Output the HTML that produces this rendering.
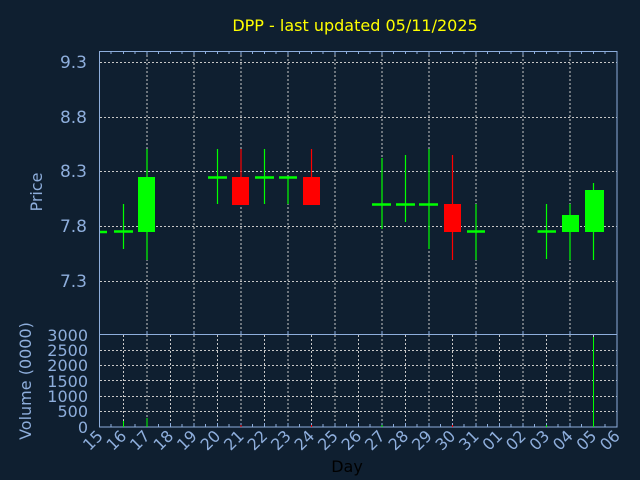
<!DOCTYPE html>
<html><head><meta charset="utf-8"><style>
html,body{margin:0;padding:0;background:#0f1f30;}
svg{display:block;}
text{font-family:"DejaVu Sans","Liberation Sans",sans-serif;}
</style></head><body>
<svg width="640" height="480" viewBox="0 0 640 480" xmlns="http://www.w3.org/2000/svg">
<rect width="640" height="480" fill="#0f1f30"/>
<text x="355" y="31" fill="#ffff00" font-size="16" text-anchor="middle">DPP - last updated 05/11/2025</text>
<g stroke="#c8c8c8" stroke-width="1" stroke-dasharray="2,2" fill="none">
<path d="M100 62.5H617M100 117.5H617M100 171.5H617M100 226.5H617M100 281.5H617"/>
<path d="M147 51V334M194 51V334M241 51V334M288 51V334M335 51V334M382 51V334M429 51V334M476 51V334M523 51V334M570 51V334"/>
<path d="M100 411.5H617M100 396.5H617M100 380.5H617M100 365.5H617M100 350.5H617"/>
<path d="M123.5 335V427M147 335V427M170.5 335V427M194 335V427M217.5 335V427M241 335V427M264.5 335V427M288 335V427M311.5 335V427M335 335V427M358.5 335V427M382 335V427M405.5 335V427M429 335V427M452.5 335V427M476 335V427M499.5 335V427M523 335V427M546.5 335V427M570 335V427M593.5 335V427"/>
</g>
<g stroke="#8eaedc" stroke-width="1" fill="none">
<rect x="99.5" y="51.5" width="517.5" height="283"/>
<rect x="99.5" y="334.5" width="517.5" height="92.5"/>
<path d="M111 51v3M123.5 51v3M135 51v3M147 51v4M158.5 51v3M170.5 51v3M182 51v3M194 51v4M205.5 51v3M217.5 51v3M229 51v3M241 51v4M252.5 51v3M264.5 51v3M276 51v3M288 51v4M299.5 51v3M311.5 51v3M323 51v3M335 51v4M346.5 51v3M358.5 51v3M370 51v3M382 51v4M393.5 51v3M405.5 51v3M417 51v3M429 51v4M440.5 51v3M452.5 51v3M464 51v3M476 51v4M487.5 51v3M499.5 51v3M511 51v3M523 51v4M534.5 51v3M546.5 51v3M558 51v3M570 51v4M581.5 51v3M593.5 51v3M605 51v3"/>
<path d="M111 427v-3M123.5 427v-4M135 427v-3M147 427v-4M158.5 427v-3M170.5 427v-4M182 427v-3M194 427v-4M205.5 427v-3M217.5 427v-4M229 427v-3M241 427v-4M252.5 427v-3M264.5 427v-4M276 427v-3M288 427v-4M299.5 427v-3M311.5 427v-4M323 427v-3M335 427v-4M346.5 427v-3M358.5 427v-4M370 427v-3M382 427v-4M393.5 427v-3M405.5 427v-4M417 427v-3M429 427v-4M440.5 427v-3M452.5 427v-4M464 427v-3M476 427v-4M487.5 427v-3M499.5 427v-4M511 427v-3M523 427v-4M534.5 427v-3M546.5 427v-4M558 427v-3M570 427v-4M581.5 427v-3M593.5 427v-4M605 427v-3"/>
<path d="M147 334v-3M194 334v-3M241 334v-3M288 334v-3M335 334v-3M382 334v-3M429 334v-3M476 334v-3M523 334v-3M570 334v-3"/>
</g>
<g fill="#8eaedc" font-size="17" text-anchor="end">
<text x="87" y="68">9.3</text><text x="87" y="123">8.8</text><text x="87" y="177">8.3</text><text x="87" y="232">7.8</text><text x="87" y="287">7.3</text>
</g>
<g fill="#8eaedc" font-size="16" text-anchor="end">
<text x="88" y="341">3000</text><text x="88" y="356">2500</text><text x="88" y="371">2000</text><text x="88" y="387">1500</text><text x="88" y="402">1000</text><text x="88" y="417">500</text><text x="88" y="433">0</text>
</g>
<text transform="translate(42,192) rotate(-90)" fill="#8eaedc" font-size="16" text-anchor="middle">Price</text>
<text transform="translate(31,381) rotate(-90)" fill="#8eaedc" font-size="16" text-anchor="middle">Volume (0000)</text>
<text x="347" y="472" fill="#000" font-size="16" text-anchor="middle">Day</text>
<g fill="#8eaedc" font-size="16" text-anchor="end">
<text transform="translate(104,437) rotate(-45)">15</text><text transform="translate(127.5,437) rotate(-45)">16</text><text transform="translate(151,437) rotate(-45)">17</text><text transform="translate(174.5,437) rotate(-45)">18</text><text transform="translate(198,437) rotate(-45)">19</text><text transform="translate(221.5,437) rotate(-45)">20</text><text transform="translate(245,437) rotate(-45)">21</text><text transform="translate(268.5,437) rotate(-45)">22</text><text transform="translate(292,437) rotate(-45)">23</text><text transform="translate(315.5,437) rotate(-45)">24</text><text transform="translate(339,437) rotate(-45)">25</text><text transform="translate(362.5,437) rotate(-45)">26</text><text transform="translate(386,437) rotate(-45)">27</text><text transform="translate(409.5,437) rotate(-45)">28</text><text transform="translate(433,437) rotate(-45)">29</text><text transform="translate(456.5,437) rotate(-45)">30</text><text transform="translate(480,437) rotate(-45)">31</text><text transform="translate(503.5,437) rotate(-45)">01</text><text transform="translate(527,437) rotate(-45)">02</text><text transform="translate(550.5,437) rotate(-45)">03</text><text transform="translate(574,437) rotate(-45)">04</text><text transform="translate(597.5,437) rotate(-45)">05</text><text transform="translate(621,437) rotate(-45)">06</text>
</g>
<g stroke="#00ff00" stroke-width="1.2" fill="none">
<path d="M123.5 204V249M147 149V260M217.5 149V204M264.5 149V204M288 177V204M382 158V229M405.5 155V222M429 149V249M476 204V260M546.5 204V259M570 204V260M593.5 183V260"/>
</g>
<g stroke="#00ff00" stroke-width="2.5" fill="none">
<path d="M100 232H107M114 231.5H133M208 177.5H227M255 177.5H274M279 177.5H297M372 204.5H391M396 204.5H415M419 204.5H438M467 231.5H485M537.5 231.5H556"/>
</g>
<g stroke="#ff0000" stroke-width="1.2"><path d="M241 149V177M311.5 149V177M452.5 155V260"/></g>
<g fill="#00ff00">
<rect x="138" y="177" width="17" height="55"/>
<rect x="562" y="215" width="17" height="17"/>
<rect x="585" y="190" width="19" height="42"/>
</g>
<g fill="#ff0000">
<rect x="232" y="177" width="17" height="28"/>
<rect x="303" y="177" width="17" height="28"/>
<rect x="444" y="204" width="17" height="28"/>
</g>
<g stroke="#00ff00" stroke-width="1"><path d="M123.5 427V421M147 427V418M382 427V425M546.5 427V425M593.5 427V337"/></g>
<g stroke="#ff0000" stroke-width="1"><path d="M241 427V425M311.5 427V425M452.5 427V425"/></g>
</svg>
</body></html>
